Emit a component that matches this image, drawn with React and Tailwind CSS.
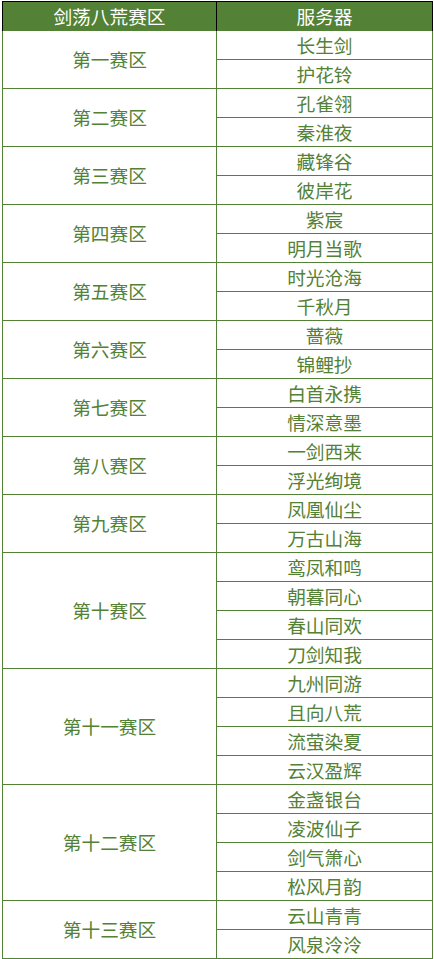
import React from 'react';

const zones = [
  { name: '第一赛区', servers: ['长生剑', '护花铃'] },
  { name: '第二赛区', servers: ['孔雀翎', '秦淮夜'] },
  { name: '第三赛区', servers: ['藏锋谷', '彼岸花'] },
  { name: '第四赛区', servers: ['紫宸', '明月当歌'] },
  { name: '第五赛区', servers: ['时光沧海', '千秋月'] },
  { name: '第六赛区', servers: ['蔷薇', '锦鲤抄'] },
  { name: '第七赛区', servers: ['白首永携', '情深意墨'] },
  { name: '第八赛区', servers: ['一剑西来', '浮光绚境'] },
  { name: '第九赛区', servers: ['凤凰仙尘', '万古山海'] },
  { name: '第十赛区', servers: ['鸾凤和鸣', '朝暮同心', '春山同欢', '刀剑知我'] },
  { name: '第十一赛区', servers: ['九州同游', '且向八荒', '流萤染夏', '云汉盈辉'] },
  { name: '第十二赛区', servers: ['金盏银台', '凌波仙子', '剑气箫心', '松风月韵'] },
  { name: '第十三赛区', servers: ['云山青青', '风泉泠泠'] },
];

export default function App() {
  return (
    <div className="bg-white min-h-[959px] pt-[1px] text-[18.7px] leading-none" style={{ fontFamily: '"Noto Sans CJK SC", "Noto Sans", sans-serif' }}>
      <div className="ml-[2px] w-[431px]">
        <div className="flex h-[30px] bg-[#538135] text-white border-t border-x border-black">
          <div className="w-[214px] border-r border-black flex items-center justify-center">剑荡八荒赛区</div>
          <div className="flex-1 flex items-center justify-center">服务器</div>
        </div>
        {zones.map(z => (
          <div key={z.name} className="flex border-x border-b border-[#538135] text-[#538135]">
            <div className="w-[214px] border-r border-[#538135] flex items-center justify-center">{z.name}</div>
            <div className="flex-1">
              {z.servers.map((s, i) => (
                <div key={s} className={`h-[28px] flex items-center justify-center ${i > 0 ? 'border-t border-[#538135] h-[29px]' : ''}`}>
                  {s}
                </div>
              ))}
            </div>
          </div>
        ))}
      </div>
    </div>
  );
}
